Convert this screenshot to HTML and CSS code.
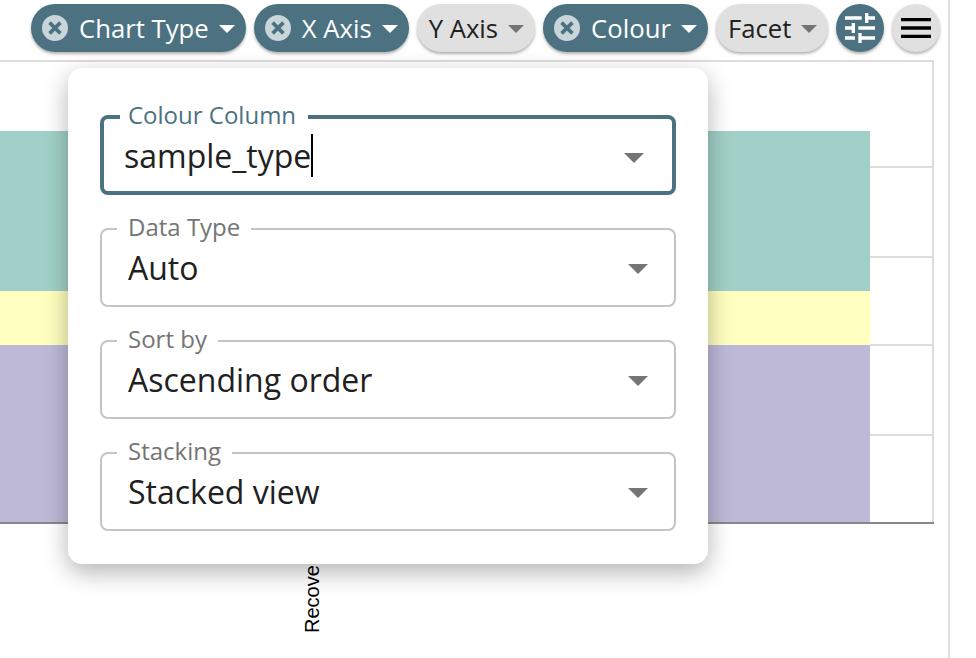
FILE: index.html
```html
<!DOCTYPE html>
<html>
  <head>
    <title>Chart Settings</title>
    <link rel="stylesheet" href="styles.css">
  </head>
  <body>
    <div class="page">
      <div class="toolbar">
        <div class="chip chip-active">
          <span class="chip-clear"><svg viewBox="0 0 24 24"><path d="M7 7l10 10M17 7L7 17"/></svg></span>
          <span class="chip-label">Chart Type</span>
          <span class="caret"></span>
        </div>
        <div class="chip chip-active">
          <span class="chip-clear"><svg viewBox="0 0 24 24"><path d="M7 7l10 10M17 7L7 17"/></svg></span>
          <span class="chip-label">X Axis</span>
          <span class="caret"></span>
        </div>
        <div class="chip">
          <span class="chip-label">Y Axis</span>
          <span class="caret"></span>
        </div>
        <div class="chip chip-active">
          <span class="chip-clear"><svg viewBox="0 0 24 24"><path d="M7 7l10 10M17 7L7 17"/></svg></span>
          <span class="chip-label">Colour</span>
          <span class="caret"></span>
        </div>
        <div class="chip">
          <span class="chip-label">Facet</span>
          <span class="caret"></span>
        </div>
        <div class="round-btn round-btn-active">
          <svg viewBox="0 0 24 24"><path d="M3 17v2h6v-2H3zM3 5v2h10V5H3zm10 16v-2h8v-2h-8v-2h-2v6h2zM7 9v2H3v2h4v2h2V9H7zm14 4v-2H11v2h10zm-6-4h2V7h4V5h-4V3h-2v6z"/></svg>
        </div>
        <div class="round-btn">
          <svg viewBox="0 0 24 24"><path d="M3 18h18v-2H3v2zm0-5h18v-2H3v2zm0-7v2h18V6H3z"/></svg>
        </div>
      </div>

      <svg class="chart" width="948" height="598" viewBox="0 0 948 598">
        <rect class="frame" x="-2" y="1" width="935" height="462"/>
        <line class="grid" x1="0" y1="107" x2="933" y2="107"/>
        <line class="grid" x1="0" y1="197" x2="933" y2="197"/>
        <line class="grid" x1="0" y1="285" x2="933" y2="285"/>
        <line class="grid" x1="0" y1="375" x2="933" y2="375"/>
        <rect x="0" y="71" width="870" height="160" fill="#a0d0c7"/>
        <rect x="0" y="231" width="870" height="54" fill="#ffffbf"/>
        <rect x="0" y="285" width="870" height="177" fill="#bdb9d7"/>
        <line class="axis" x1="0" y1="463" x2="934" y2="463"/>
        <text class="tick" transform="translate(319 573) rotate(-90)">Recovered</text>
      </svg>

      <div class="popover">
        <fieldset class="field field-focus">
          <legend>Colour Column</legend>
          <div class="field-value"><span class="typed">sample_type</span></div>
          <span class="caret caret-grey"></span>
        </fieldset>
        <fieldset class="field">
          <legend>Data Type</legend>
          <div class="field-value">Auto</div>
          <span class="caret caret-grey"></span>
        </fieldset>
        <fieldset class="field">
          <legend>Sort by</legend>
          <div class="field-value">Ascending order</div>
          <span class="caret caret-grey"></span>
        </fieldset>
        <fieldset class="field">
          <legend>Stacking</legend>
          <div class="field-value">Stacked view</div>
          <span class="caret caret-grey"></span>
        </fieldset>
      </div>
    </div>
  </body>
</html>
```

FILE: styles.css
```css
body {
  margin: 0;
  background-color: #fff;
  color: #212121;
  font-family: "Open Sans", sans-serif;
  overflow: hidden;
}

.page {
  position: relative;
  width: 948px;
  height: 658px;
  border-right: 2px solid #e0e0e0;
}

.toolbar {
  display: flex;
  gap: 8px;
  height: 60px;
  padding: 4px 0 0 31px;
  box-sizing: border-box;
}

.chip {
  display: flex;
  align-items: center;
  height: 48px;
  padding: 0 11px 0 12px;
  border-radius: 24px;
  background-color: #e0e0e0;
  box-shadow: 0 2px 3px rgba(0, 0, 0, 0.3);
  font-size: 25.7px;
}

.chip-active {
  padding-left: 11px;
  background-color: #4c7282;
  color: #fff;
}

.chip-clear {
  display: flex;
  width: 26px;
  height: 26px;
  margin-right: 11px;
  border-radius: 50%;
  background-color: #c9d5da;
}

.chip-clear svg {
  width: 26px;
  height: 26px;
  fill: none;
  stroke: #4c7282;
  stroke-width: 3.4;
}

.chip-label {
  margin-right: 10px;
}

.caret {
  width: 0;
  height: 0;
  border-left: 10px solid transparent;
  border-right: 10px solid transparent;
  border-top: 10px solid #fff;
  margin-top: 2px;
}

.chip .caret {
  border-left-width: 8px;
  border-right-width: 8px;
  border-top-width: 8px;
  border-top-color: #757575;
}

.chip-active .caret {
  border-top-color: #fff;
}

.round-btn {
  display: flex;
  align-items: center;
  justify-content: center;
  width: 48px;
  height: 48px;
  border-radius: 50%;
  background-color: #e0e0e0;
  box-shadow: 0 2px 3px rgba(0, 0, 0, 0.3);
}

.round-btn svg {
  width: 40px;
  height: 40px;
  fill: #000;
}

.round-btn-active {
  background-color: #4c7282;
}

.round-btn-active svg {
  fill: #fff;
}

.chart {
  display: block;
}

.frame {
  fill: #fff;
  stroke: #ddd;
  stroke-width: 2;
}

.grid {
  stroke: #ddd;
  stroke-width: 2;
}

.axis {
  stroke: #888;
  stroke-width: 2;
}

.tick {
  font-family: "Liberation Sans", sans-serif;
  font-size: 20px;
  fill: #000;
}

.popover {
  position: absolute;
  left: 68px;
  top: 68px;
  display: flex;
  flex-direction: column;
  gap: 32px;
  width: 640px;
  height: 496px;
  padding: 47px 32px 0;
  box-sizing: border-box;
  border-radius: 14px;
  background-color: #fff;
  box-shadow: 0 8px 24px rgba(0, 0, 0, 0.3);
}

.field {
  position: relative;
  height: 80px;
  margin: 0;
  padding: 0 0 0 26px;
  box-sizing: border-box;
  border: 2px solid #c4c4c4;
  border-radius: 8px;
}

.field legend {
  margin-left: -11px;
  padding: 0 11px 4px;
  height: 0;
  line-height: 0;
  font-size: 24px;
  color: #757575;
}

.field-value {
  height: 68px;
  line-height: 74px;
  font-size: 32px;
  white-space: nowrap;
}

.field .caret {
  position: absolute;
  right: 26px;
  top: 33px;
  margin: 0;
  border-top-color: #757575;
}

.field-focus {
  border: 4px solid #4c7282;
  padding-left: 20px;
}

.field-focus legend {
  margin-left: -4px;
  padding: 0 12px 4px 8px;
  color: #4c7282;
}

.field-focus .field-value {
  line-height: 74px;
}

.field-focus .caret {
  right: 28px;
  top: 34px;
}

.typed {
  border-right: 2px solid #000;
}
```
